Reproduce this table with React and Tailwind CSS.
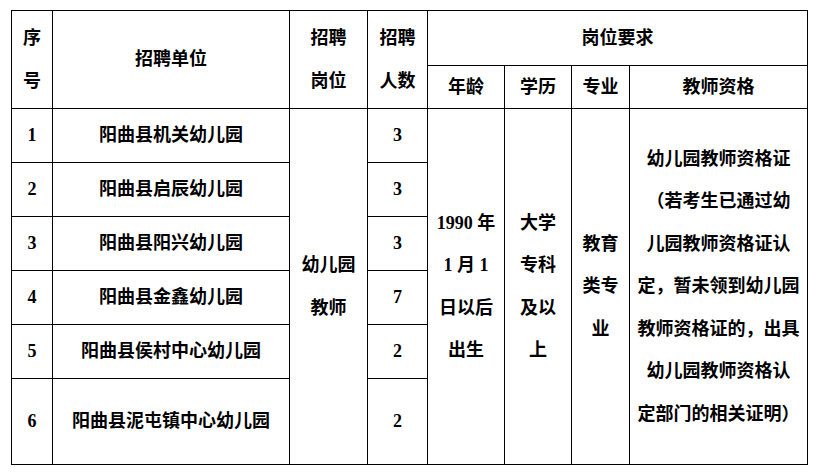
const FONT = { fontFamily: '"Liberation Serif", "Noto Sans CJK SC", serif' };

const ROWS = [
  { no: '1', unit: '阳曲县机关幼儿园', count: '3', h: 'h-[54px]' },
  { no: '2', unit: '阳曲县启辰幼儿园', count: '3', h: 'h-[54px]' },
  { no: '3', unit: '阳曲县阳兴幼儿园', count: '3', h: 'h-[54px]' },
  { no: '4', unit: '阳曲县金鑫幼儿园', count: '7', h: 'h-[54px]' },
  { no: '5', unit: '阳曲县侯村中心幼儿园', count: '2', h: 'h-[54px]' },
  { no: '6', unit: '阳曲县泥屯镇中心幼儿园', count: '2', h: 'h-[86px]' },
];

function Lines({ items }) {
  return (
    <div className="leading-[42.5px]">
      {items.map((t, i) => (
        <div key={i} className="whitespace-pre">{t}</div>
      ))}
    </div>
  );
}

const td = 'border border-black text-center align-middle p-0';

export default function App() {
  return (
    <div className="w-[822px] h-[476px] bg-white pt-[10px] pl-[11px]" style={FONT}>
      <table className="table-fixed border-collapse w-[796px] text-[18px] font-bold text-black">
        <colgroup>
          <col className="w-[41px]" />
          <col className="w-[237px]" />
          <col className="w-[78px]" />
          <col className="w-[60px]" />
          <col className="w-[77px]" />
          <col className="w-[67px]" />
          <col className="w-[58px]" />
          <col className="w-[178px]" />
        </colgroup>
        <tbody>
          <tr className="h-[55px]">
            <td rowSpan={2} className={td}><Lines items={['序', '号']} /></td>
            <td rowSpan={2} className={td}>招聘单位</td>
            <td rowSpan={2} className={td}><Lines items={['招聘', '岗位']} /></td>
            <td rowSpan={2} className={td}><Lines items={['招聘', '人数']} /></td>
            <td colSpan={4} className={td}>岗位要求</td>
          </tr>
          <tr className="h-[43px]">
            <td className={td}>年龄</td>
            <td className={td}>学历</td>
            <td className={td}>专业</td>
            <td className={td}>教师资格</td>
          </tr>
          {ROWS.map((r, i) => (
            <tr key={r.no} className={r.h}>
              <td className={td}>{r.no}</td>
              <td className={td}>{r.unit}</td>
              {i === 0 && (
                <td rowSpan={6} className={td}><Lines items={['幼儿园', '教师']} /></td>
              )}
              <td className={td}>{r.count}</td>
              {i === 0 && (
                <>
                  <td rowSpan={6} className={td}><Lines items={['1990 年', '1 月 1', '日以后', '出生']} /></td>
                  <td rowSpan={6} className={td}><Lines items={['大学', '专科', '及以', '上']} /></td>
                  <td rowSpan={6} className={td}><Lines items={['教育', '类专', '业']} /></td>
                  <td rowSpan={6} className={td}>
                    <Lines
                      items={[
                        '幼儿园教师资格证',
                        '（若考生已通过幼',
                        '儿园教师资格证认',
                        '定，暂未领到幼儿园',
                        '教师资格证的，出具',
                        '幼儿园教师资格认',
                        '定部门的相关证明）',
                      ]}
                    />
                  </td>
                </>
              )}
            </tr>
          ))}
        </tbody>
      </table>
    </div>
  );
}
